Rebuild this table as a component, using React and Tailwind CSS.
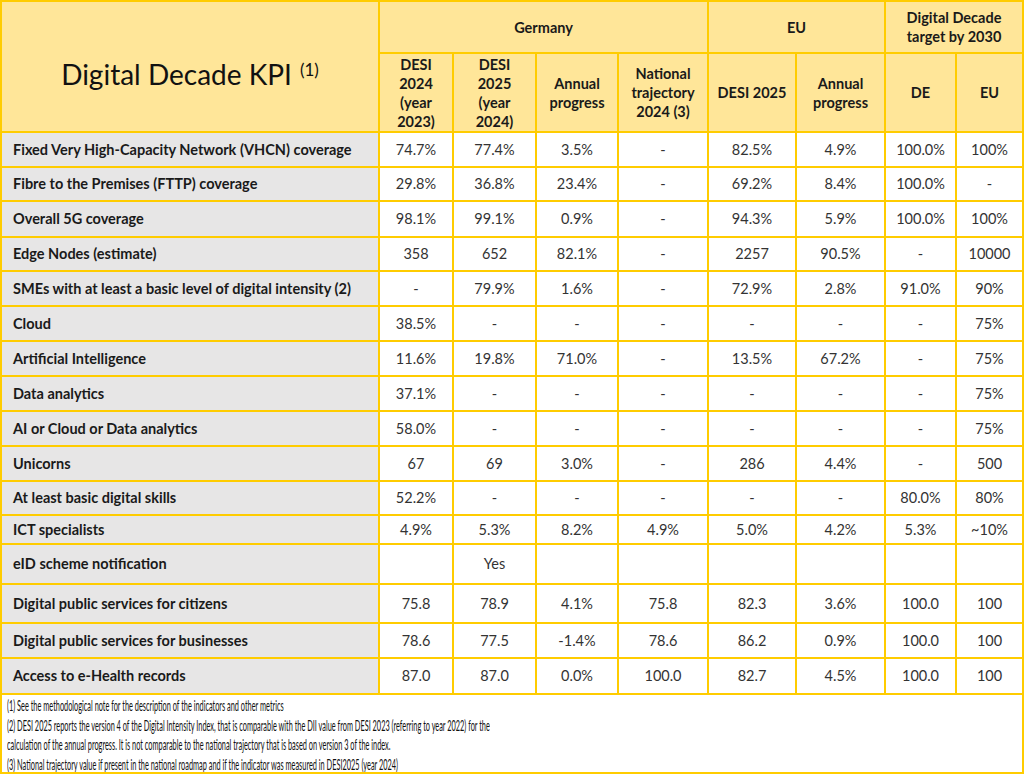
import React from "react"

const rows = [
    ["Fixed Very High-Capacity Network (VHCN) coverage", "74.7%", "77.4%", "3.5%", "-", "82.5%", "4.9%", "100.0%", "100%"],
    ["Fibre to the Premises (FTTP) coverage", "29.8%", "36.8%", "23.4%", "-", "69.2%", "8.4%", "100.0%", "-"],
    ["Overall 5G coverage", "98.1%", "99.1%", "0.9%", "-", "94.3%", "5.9%", "100.0%", "100%"],
    ["Edge Nodes (estimate)", "358", "652", "82.1%", "-", "2257", "90.5%", "-", "10000"],
    ["SMEs with at least a basic level of digital intensity (2)", "-", "79.9%", "1.6%", "-", "72.9%", "2.8%", "91.0%", "90%"],
    ["Cloud", "38.5%", "-", "-", "-", "-", "-", "-", "75%"],
    ["Artificial Intelligence", "11.6%", "19.8%", "71.0%", "-", "13.5%", "67.2%", "-", "75%"],
    ["Data analytics", "37.1%", "-", "-", "-", "-", "-", "-", "75%"],
    ["AI or Cloud or Data analytics", "58.0%", "-", "-", "-", "-", "-", "-", "75%"],
    ["Unicorns", "67", "69", "3.0%", "-", "286", "4.4%", "-", "500"],
    ["At least basic digital skills", "52.2%", "-", "-", "-", "-", "-", "80.0%", "80%"],
    ["ICT specialists", "4.9%", "5.3%", "8.2%", "4.9%", "5.0%", "4.2%", "5.3%", "~10%"],
    ["eID scheme notification", "", "Yes", "", "", "", "", "", ""],
    ["Digital public services for citizens", "75.8", "78.9", "4.1%", "75.8", "82.3", "3.6%", "100.0", "100"],
    ["Digital public services for businesses", "78.6", "77.5", "-1.4%", "78.6", "86.2", "0.9%", "100.0", "100"],
    ["Access to e-Health records", "87.0", "87.0", "0.0%", "100.0", "82.7", "4.5%", "100.0", "100"],
]

const subHeads = [
    ["DESI", "2024", "(year", "2023)"],
    ["DESI", "2025", "(year", "2024)"],
    ["Annual", "progress"],
    ["National", "trajectory", "2024 (3)"],
    ["DESI 2025"],
    ["Annual", "progress"],
    ["DE"],
    ["EU"],
]

const notes = [
    "(1) See the methodological note for the description of the indicators and other metrics",
    "(2) DESI 2025 reports the version 4 of the Digital Intensity Index, that is comparable with the DII value from DESI 2023 (referring to year 2022) for the",
    "calculation of the annual progress. It is not comparable to the national trajectory that is based on version 3 of the index.",
    "(3) National trajectory value if present in the national roadmap and if the indicator was measured in DESI2025 (year 2024)",
]

function HeadCell({ lines, className = "" }) {
    return (
        <div className={"bg-[#ffe699] flex flex-col items-center justify-center text-center font-bold text-[14.5px] leading-[19px] text-[#1a1a1a] " + className}>
            {lines.map((l, i) => <span key={i}>{l}</span>)}
        </div>
    )
}

export default function App() {
    return (
        <div className="w-[1024px] bg-white font-['Lato','Open_Sans',sans-serif]">
            <div className="bg-[#ffcc00] p-[2px] flex flex-col gap-[2px]">
                <div className="grid grid-cols-[376px_72px_81px_80px_88px_86px_87px_69px_65px] grid-rows-[50px_77px_33px_32px_34px_32px_33px_33px_33px_33px_33px_33px_32px_27px_38px_37px_33px_34px] gap-[2px]">
                    <div className="row-span-2 bg-[#ffe699] flex items-center justify-center pt-[14px] text-[#111]">
                        <span className="text-[28px] leading-[34px]">Digital Decade KPI</span>
                        <span className="text-[17px] leading-[20px] self-start mt-[44px] ml-[8px]">(1)</span>
                    </div>
                    <HeadCell lines={["Germany"]} className="col-span-4" />
                    <HeadCell lines={["EU"]} className="col-span-2" />
                    <HeadCell lines={["Digital Decade", "target by 2030"]} className="col-span-2" />
                    {subHeads.map((h, i) => <HeadCell key={i} lines={h} />)}

                    {rows.map((r, i) => (
                        <React.Fragment key={i}>
                            <div className="bg-[#e7e6e6] flex items-center pl-[11px] font-bold text-[14.5px] text-[#1a1a1a] whitespace-nowrap">
                                {r[0]}
                            </div>
                            {r.slice(1).map((v, j) => (
                                <div key={j} className="bg-white flex items-center justify-center text-[14.5px] text-[#333]">
                                    {v}
                                </div>
                            ))}
                        </React.Fragment>
                    ))}
                </div>
                <div className="bg-white h-[77px] pl-[5px] text-[16px] leading-[19.5px] text-[#111] overflow-hidden">
                    {notes.map((n, i) => (
                        <div key={i} className="whitespace-nowrap origin-left scale-x-[0.46]">{n}</div>
                    ))}
                </div>
            </div>
        </div>
    )
}
